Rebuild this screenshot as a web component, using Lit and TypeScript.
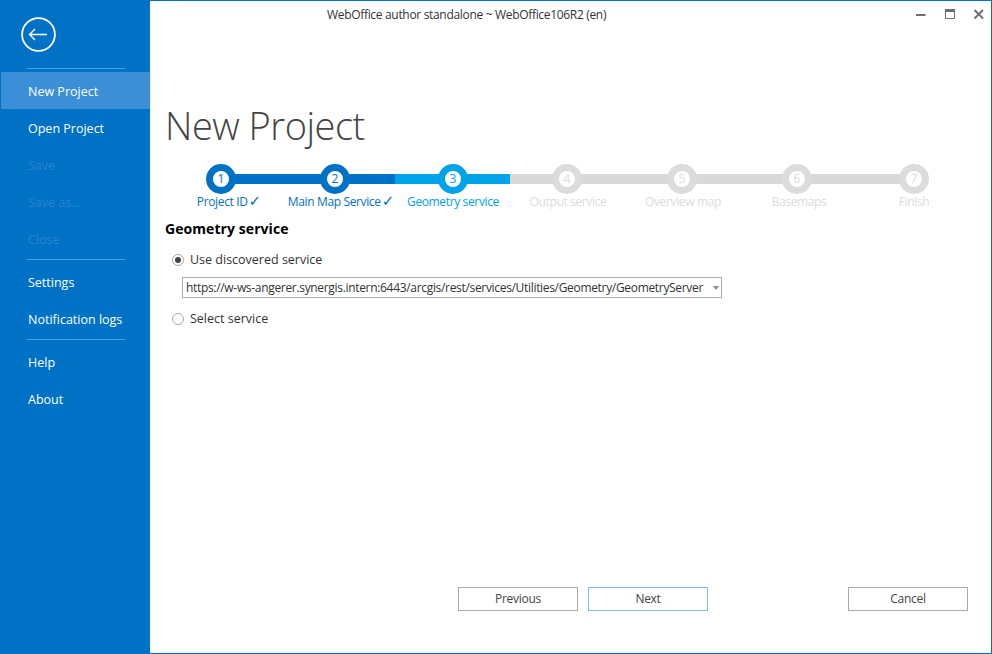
import { LitElement, html, css, svg } from "lit";
import { customElement } from "lit/decorators.js";

const steps = [
  { n: 1, label: "Project ID", state: "done", w: 114, pad: 16 },
  { n: 2, label: "Main Map Service", state: "done", w: 114, pad: 12 },
  { n: 3, label: "Geometry service", state: "current", w: 122, pad: 0 },
  { n: 4, label: "Output service", state: "todo", w: 106, pad: 2 },
  { n: 5, label: "Overview map", state: "todo", w: 124, pad: 2 },
  { n: 6, label: "Basemaps", state: "todo", w: 106, pad: 4 },
  { n: 7, label: "Finish", state: "todo", w: 128, pad: 0 },
];

@customElement("app-root")
export class AppRoot extends LitElement {
  static styles = css`
    :host {
      display: block;
      height: 100vh;
      font-family: "Open Sans", "Noto Sans", sans-serif;
      font-size: 12.5px;
      letter-spacing: 0;
      color: #333;
      box-sizing: border-box;
    }
    * { box-sizing: border-box; }
    .window {
      display: flex;
      height: 100%;
      background: #fff;
      border: 1px solid #0072c6;
      border-left: none;
    }
    .side {
      width: 150px;
      margin-top: -1px;
      background: #0072c6;
      flex: none;
      display: flex;
      flex-direction: column;
      color: #fff;
    }
    .back {
      margin: 17px 0 16px 21px;
      width: 35px;
      height: 35px;
      display: block;
      flex: none;
    }
    .sep {
      height: 1px;
      margin: 0 25px 0 27px;
      background: #4f9fe0;
      flex: none;
    }
    .sep.top { margin-bottom: 3px; }
    .sep.mid { margin-top: 2px; margin-bottom: 4px; }
    .sep.tight { margin-top: 1px; }
    .item {
      height: 37px;
      display: flex;
      align-items: center;
      padding-left: 28px;
      flex: none;
    }
    .item.low { padding-top: 2px; }
    .item.sel {
      background: #3a8fd6;
      background-clip: padding-box;
      margin: 0 -1px 0 1px;
      padding-left: 27px;
      border-right: 1px solid #e3eff9;
    }
    .item.off { color: #2a84cf; }

    .main {
      flex: 1;
      min-width: 0;
      display: flex;
      flex-direction: column;
    }
    .titlebar {
      display: flex;
      height: 30px;
      flex: none;
      align-items: flex-start;
    }
    .wintitle {
      margin: 6px 0 0 177px;
      font-size: 12px;
      letter-spacing: -0.32px;
      line-height: 16px;
      color: #333;
    }
    .controls { margin-left: auto; display: flex; }
    .controls svg { display: block; }
    h1 {
      margin: 65px 0 0 15px;
      font-weight: 300;
      font-size: 38px;
      line-height: 58px;
      letter-spacing: -0.5px;
      color: #444;
    }
    .stepper {
      display: grid;
      margin: 10px 0 0 14px;
      width: 800px;
    }
    .track, .steps { grid-area: 1 / 1; }
    .track {
      display: flex;
      height: 10px;
      margin: 10px 0 0 57px;
    }
    .track i { display: block; height: 10px; flex: none; }
    .t1 { width: 174px; background: #0072c6; }
    .t2 { width: 115px; background: #00a2e8; }
    .t3 { width: 404px; background: #d9d9d9; }
    .steps { display: flex; }
    .step {
      display: flex;
      flex-direction: column;
      align-items: center;
      flex: none;
    }
    .dot {
      width: 30px;
      height: 30px;
      border-radius: 50%;
      border: 7px solid currentColor;
      background: #fff;
      font-size: 12px;
      line-height: 16px;
      text-align: center;
    }
    .lbl {
      margin-top: 0;
      white-space: nowrap;
      line-height: 16px;
      height: 16px;
      font-size: 12px;
      letter-spacing: -0.36px;
    }
    .done { color: #0072c6; }
    .current { color: #00a2e8; }
    .todo { color: #dcdcdc; }
    .check {
      margin-left: 1px;
      font-family: "DejaVu Sans", sans-serif;
      font-size: 15px;
      line-height: 0;
      letter-spacing: 0;
    }

    .form { padding: 0 0 0 15px; flex: 1; }
    h2 {
      margin: 9px 0 0 0;
      font-size: 14px;
      line-height: 20px;
      letter-spacing: 0.07px;
      font-weight: 700;
      color: #000;
    }
    .radio {
      display: flex;
      align-items: center;
      gap: 6px;
      margin: 12px 0 0 7px;
      height: 18px;
      line-height: 18px;
    }
    .radio svg { flex: none; display: block; }
    .select {
      margin: 8px 0 12px 17px;
      width: 540px;
      height: 21px;
      border: 1px solid #ababab;
      display: flex;
      align-items: center;
      padding: 0 2px 0 3px;
      white-space: nowrap;
      line-height: 18px;
      font-size: 12px;
      letter-spacing: -0.32px;
    }
    .select span { flex: 1; overflow: hidden; }
    .caret {
      flex: none;
      width: 0;
      height: 0;
      border-left: 3px solid transparent;
      border-right: 3px solid transparent;
      border-top: 4px solid #8a8a8a;
      margin-left: 6px;
    }
    .select + .radio { margin-top: 12px; }
    .footer {
      display: flex;
      padding: 0 23px 42px 308px;
      flex: none;
    }
    button {
      font: inherit;
      font-size: 12px;
      letter-spacing: -0.3px;
      color: #444;
      width: 120px;
      height: 24px;
      background: #fff;
      border: 1px solid #ababab;
      padding: 0 0 2px;
    }
    button.next { margin-left: 10px; border-color: #85bde5; }
    button.cancel { margin-left: auto; }
  `;

  private step(s: (typeof steps)[number]) {
    return html`<div class="step ${s.state}" style="width:${s.w}px">
      <div class="dot">${s.n}</div>
      <div class="lbl" style="padding-left:${s.pad}px">${s.label}${s.state === "done" ? html`<span class="check">✓</span>` : ""}</div>
    </div>`;
  }

  render() {
    return html`<div class="window">
      <nav class="side">
        <svg class="back" viewBox="0 0 35 35" fill="none" stroke="#fff">
          <circle cx="17.5" cy="17.5" r="16.4" stroke-width="1.8"/>
          <path d="M8.5 17.5h17.5M14 12l-5.5 5.5 5.5 5.5" stroke-width="1.4"/>
        </svg>
        <div class="sep top"></div>
        <div class="item low sel">New Project</div>
        <div class="item low">Open Project</div>
        <div class="item low off">Save</div>
        <div class="item low off">Save as...</div>
        <div class="item low off">Close</div>
        <div class="sep mid"></div>
        <div class="item">Settings</div>
        <div class="item">Notification logs</div>
        <div class="sep mid tight"></div>
        <div class="item">Help</div>
        <div class="item">About</div>
      </nav>
      <main class="main">
        <div class="titlebar">
          <div class="wintitle">WebOffice author standalone ~ WebOffice106R2 (en)</div>
          <div class="controls">
            <svg width="91" height="29" viewBox="0 0 91 29">
              ${svg`<rect x="16" y="13" width="9.5" height="2" fill="#6f6f6f"/>
              <rect x="45.5" y="8.5" width="9" height="9" fill="none" stroke="#6f6f6f"/>
              <rect x="45" y="8" width="10" height="3" fill="#6f6f6f"/>
              <path d="M74.5 9l8.5 8.5M83 9l-8.5 8.5" stroke="#6f6f6f" stroke-width="2" fill="none"/>`}
            </svg>
          </div>
        </div>
        <h1>New Project</h1>
        <div class="stepper">
          <div class="track"><i class="t1"></i><i class="t2"></i><i class="t3"></i></div>
          <div class="steps">${steps.map((s) => this.step(s))}</div>
        </div>
        <div class="form">
          <h2>Geometry service</h2>
          <div class="radio">
            <svg width="12" height="12" viewBox="0 0 12 12"><circle cx="6" cy="6" r="5.5" fill="#fff" stroke="#a8a8a8"/><circle cx="6" cy="6" r="3" fill="#444"/></svg>
            Use discovered service
          </div>
          <div class="select"><span>https://w-ws-angerer.synergis.intern:6443/arcgis/rest/services/Utilities/Geometry/GeometryServer</span><i class="caret"></i></div>
          <div class="radio">
            <svg width="12" height="12" viewBox="0 0 12 12"><circle cx="6" cy="6" r="5.5" fill="#fff" stroke="#a8a8a8"/></svg>
            Select service
          </div>
        </div>
        <div class="footer">
          <button>Previous</button>
          <button class="next">Next</button>
          <button class="cancel">Cancel</button>
        </div>
      </main>
    </div>`;
  }
}
